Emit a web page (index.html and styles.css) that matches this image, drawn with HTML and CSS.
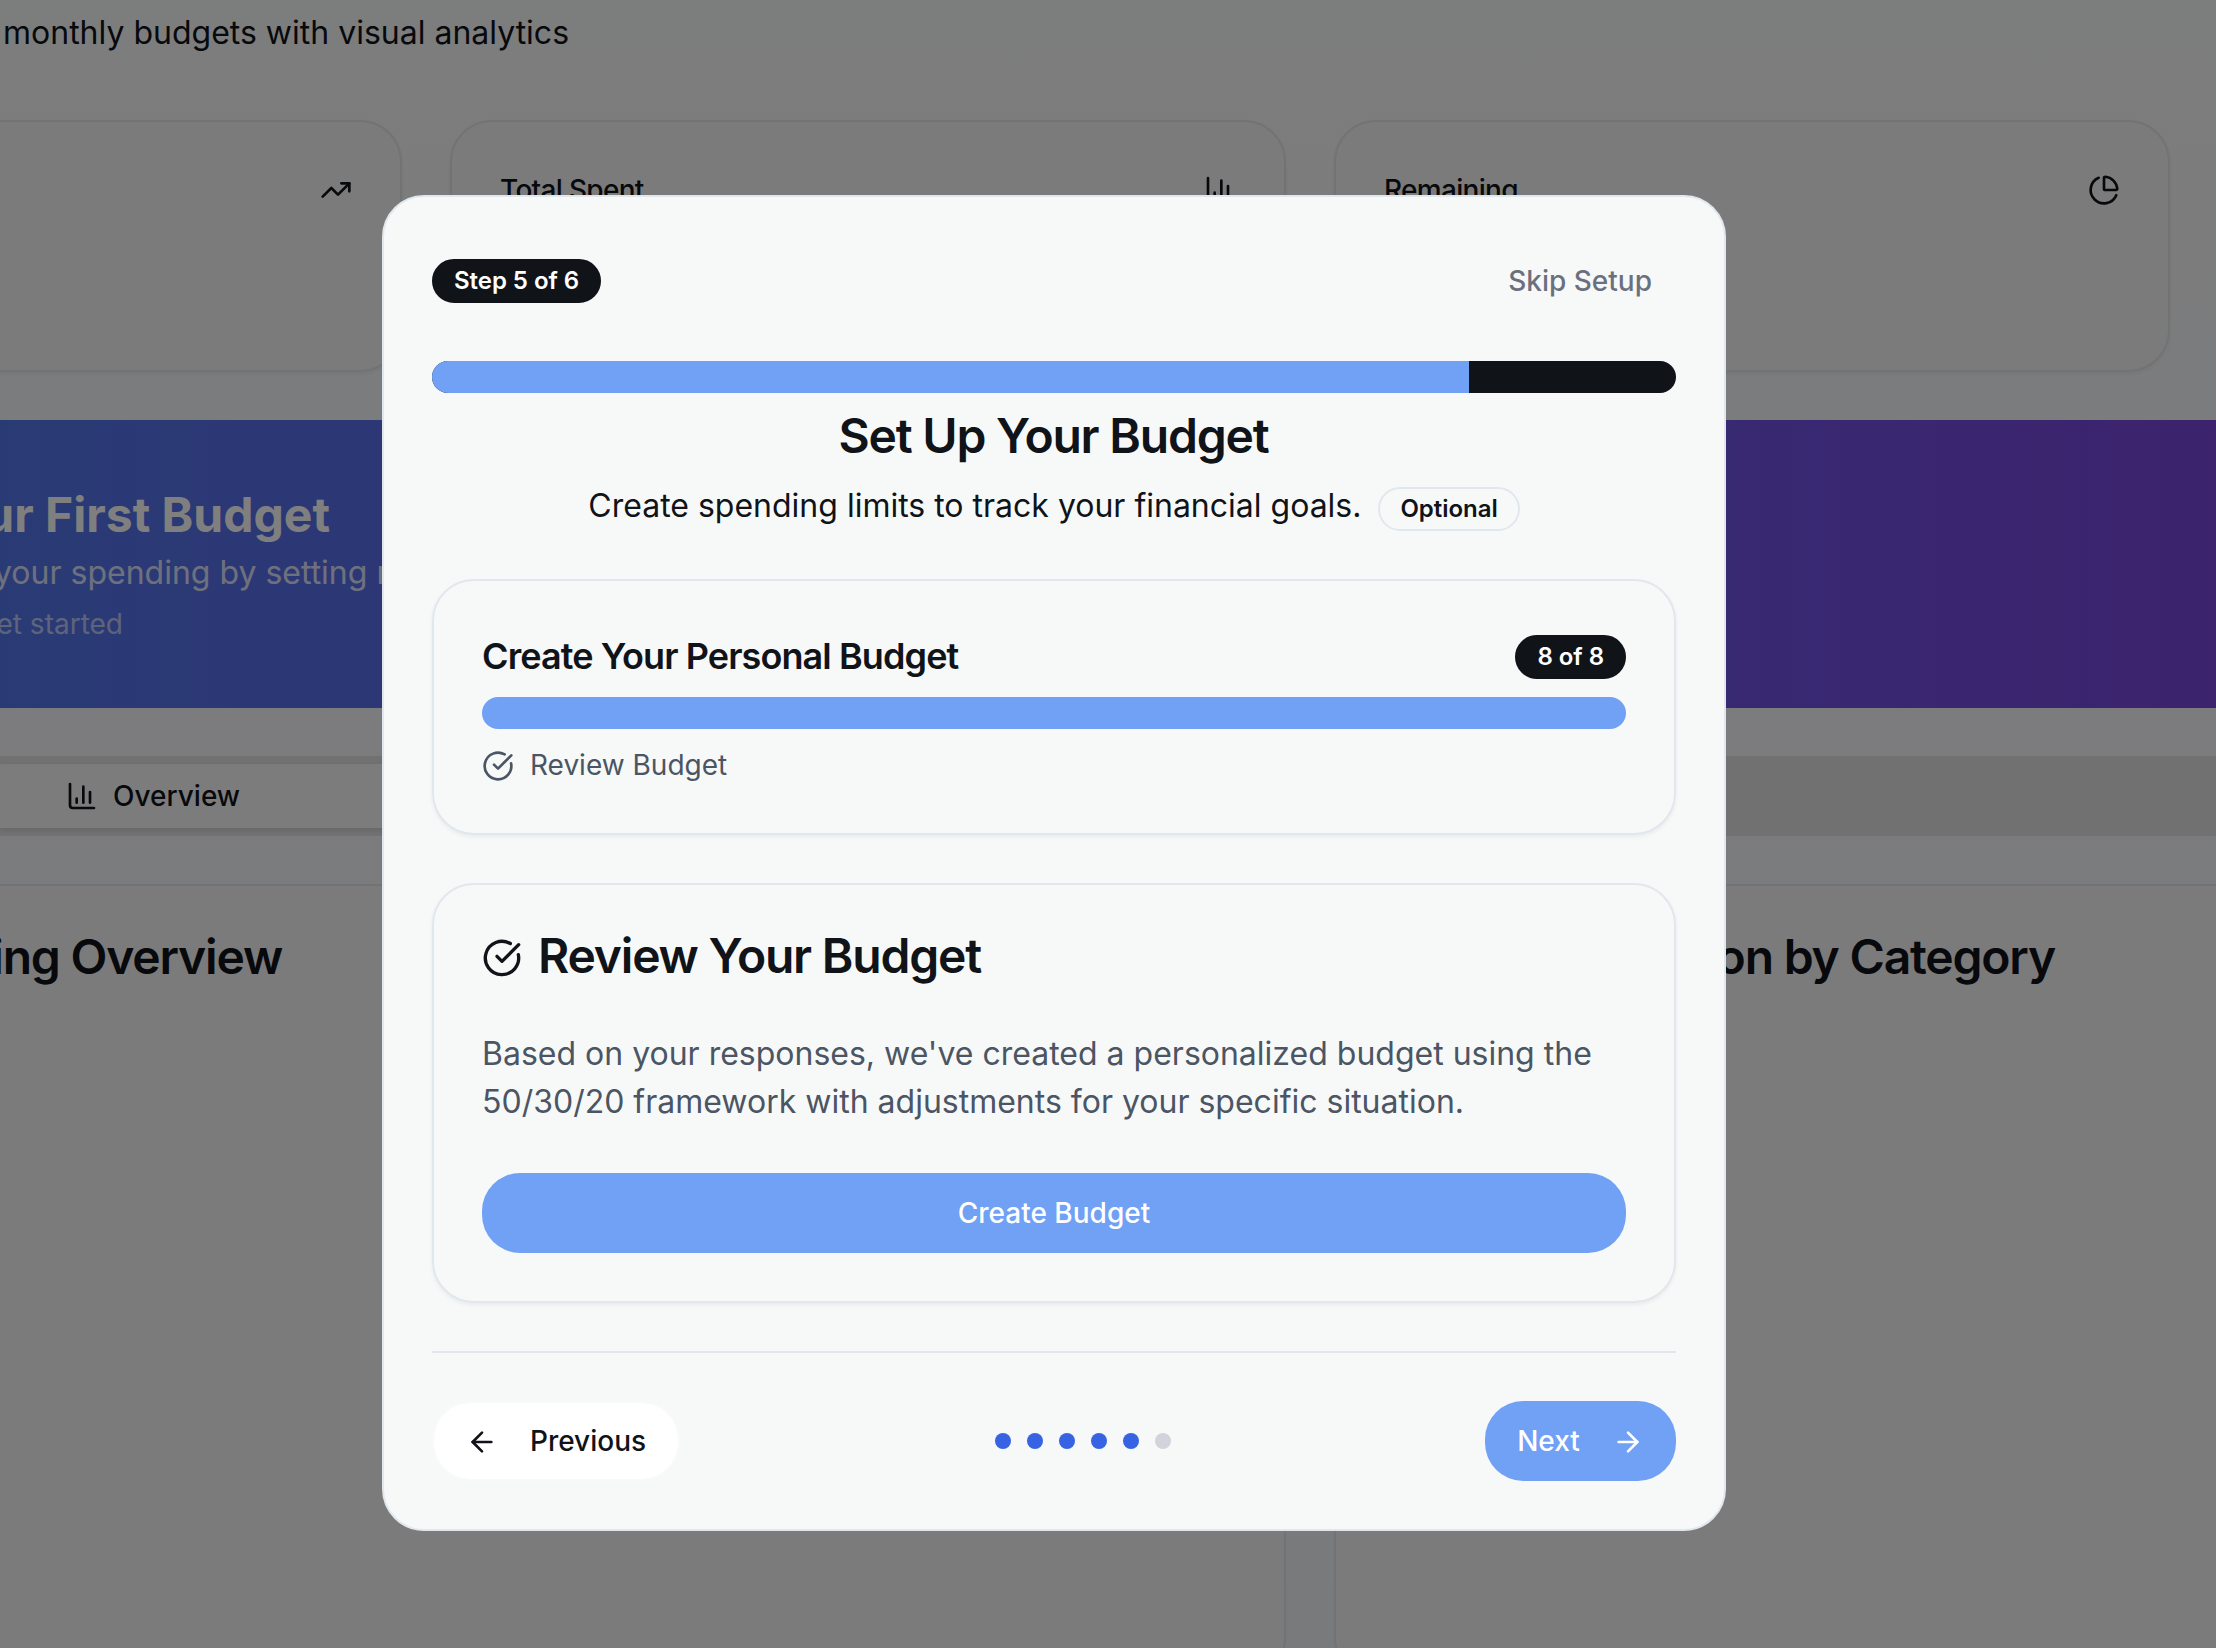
FILE: index.html
```html
<!DOCTYPE html>
<html lang="en">
<head>
<meta charset="utf-8">
<title>Budget Setup</title>
<link rel="stylesheet" href="styles.css">
</head>
<body>
<div class="page">
  <main class="dashboard">
    <p class="lead">monthly budgets with visual analytics</p>
    <section class="stats">
      <article class="stat">
        <h3></h3>
        <svg class="icon" viewBox="0 0 24 24"><path d="M16 7h6v6"/><path d="m22 7-8.5 8.5-5-5L2 17"/></svg>
      </article>
      <article class="stat">
        <h3>Total Spent</h3>
        <svg class="icon" viewBox="0 0 24 24"><path d="M3 3v16a2 2 0 0 0 2 2h16"/><path d="M18 17V9"/><path d="M13 17V5"/><path d="M8 17v-3"/></svg>
      </article>
      <article class="stat">
        <h3>Remaining</h3>
        <svg class="icon" viewBox="0 0 24 24"><path d="M21 12c.552 0 1.005-.449.95-.998a10 10 0 0 0-8.953-8.951c-.55-.055-.998.398-.998.95v8a1 1 0 0 0 1 1z"/><path d="M21.21 15.89A10 10 0 1 1 8 2.83"/></svg>
      </article>
    </section>
    <section class="banner">
      <h2 class="banner-title">ur First Budget</h2>
      <p class="banner-text">your spending by setting monthly</p>
      <p class="banner-note">et started</p>
    </section>
    <nav class="tabs">
      <button class="tab">
        <svg class="icon" viewBox="0 0 24 24"><path d="M3 3v16a2 2 0 0 0 2 2h16"/><path d="M18 17V9"/><path d="M13 17V5"/><path d="M8 17v-3"/></svg>
        Overview
      </button>
    </nav>
    <section class="panels">
      <article class="panel"><h2 class="panel-title spending">ing Overview</h2></article>
      <article class="panel"><h2 class="panel-title category">Distribution by Category</h2></article>
    </section>
  </main>

  <div class="overlay">
    <div class="modal" role="dialog">
      <header class="modal-head">
        <span class="badge">Step 5 of 6</span>
        <button class="skip">Skip Setup</button>
      </header>
      <div class="progress"><div class="bar" style="width:83.3333%"></div></div>
      <h1 class="modal-title">Set Up Your Budget</h1>
      <p class="modal-sub"><span>Create spending limits to track your financial goals.</span><span class="badge outline">Optional</span></p>

      <section class="card status">
        <div class="status-head">
          <h2>Create Your Personal Budget</h2>
          <span class="badge">8 of 8</span>
        </div>
        <div class="progress"><div class="bar" style="width:100%"></div></div>
        <div class="status-step">
          <svg class="icon" viewBox="0 0 24 24"><path d="M21.801 10A10 10 0 1 1 17 3.335"/><path d="m9 11 3 3L22 4"/></svg>
          <span>Review Budget</span>
        </div>
      </section>

      <section class="card review">
        <h2 class="review-title">
          <svg class="icon large" viewBox="0 0 24 24"><path d="M21.801 10A10 10 0 1 1 17 3.335"/><path d="m9 11 3 3L22 4"/></svg>
          <span>Review Your Budget</span>
        </h2>
        <p class="review-text">Based on your responses, we've created a personalized budget using the<br>50/30/20 framework with adjustments for your specific situation.</p>
        <button class="btn primary">Create Budget</button>
      </section>

      <footer class="modal-foot">
        <button class="btn previous">
          <svg class="icon" viewBox="0 0 24 24"><path d="m12 19-7-7 7-7"/><path d="M19 12H5"/></svg>
          <span>Previous</span>
        </button>
        <div class="dots"><i class="dot"></i><i class="dot"></i><i class="dot"></i><i class="dot"></i><i class="dot"></i><i class="dot off"></i></div>
        <button class="btn primary next">
          <span>Next</span>
          <svg class="icon" viewBox="0 0 24 24"><path d="M5 12h14"/><path d="m12 5 7 7-7 7"/></svg>
        </button>
      </footer>
    </div>
  </div>
</div>
</body>
</html>
```
FILE: styles.css
```css
* { box-sizing: border-box; }
body, h1, h2, h3, p { margin: 0; }
body {
  font-family: Inter, "Liberation Sans", sans-serif;
  font-size: 32px;
  line-height: 48px;
  color: #101318;
}
button { border: 0; background: none; font: inherit; color: inherit; padding: 0; letter-spacing: inherit; }
.icon {
  width: 32px;
  height: 32px;
  flex: none;
  fill: none;
  stroke: currentColor;
  stroke-width: 2;
  stroke-linecap: round;
  stroke-linejoin: round;
}
.icon.large { width: 40px; height: 40px; margin-top: 4px; }

.page { position: relative; width: 2216px; height: 1648px; overflow: hidden; background: linear-gradient(#f9fafb, #f3f5f9); }

/* Dashboard behind the dialog */
.dashboard { display: flex; flex-direction: column; height: 100%; overflow: hidden; white-space: nowrap; }
.lead { flex: none; padding: 9px 0 0 3px; height: 120px; }
.stats { display: grid; flex: none; grid-template-columns: repeat(3, 836px); gap: 48px; margin-left: -434px; margin-bottom: 48px; }
.stat {
  display: flex;
  justify-content: space-between;
  align-items: flex-start;
  height: 252px;
  padding: 52px 48px;
  border: 2px solid #e2e6ea;
  border-radius: 42px;
  background: #f7f7f7;
  box-shadow: 0 2px 4px rgba(0, 0, 0, .06);
}
.stat h3 { font-size: 28px; line-height: 32px; font-weight: 500; letter-spacing: -.025em; }
.banner {
  height: 288px;
  flex: none;
  padding-top: 67px;
  color: #fff;
  background: linear-gradient(to right, #5376ea, #5a6eec 17%, #7052e6 78%, #7a46dc);
}
.banner-title, .banner-note, .spending { display: flex; justify-content: flex-end; }
.banner-title { width: 330px; font-size: 48px; line-height: 56px; font-weight: 700; }
.banner-text { padding-top: 6px; margin-left: -6px; opacity: .8; }
.banner-note { width: 123px; margin-top: 3px; font-size: 28px; opacity: .6; }
.tabs { height: 80px; flex: none; margin: 48px 0; padding: 8px 0; background: #e3e3e3; }
.tab {
  display: flex;
  align-items: center;
  gap: 15px;
  width: 700px;
  height: 64px;
  padding-left: 66px;
  background: #f9f9f9;
  font-size: 28px;
  font-weight: 500;
  box-shadow: 0 2px 6px rgba(0, 0, 0, .1);
}
.panels { display: grid; flex: none; grid-template-columns: 1686px 1686px; gap: 48px; margin-left: -400px; }
.panel { height: 796px; padding-top: 39px; border: 2px solid #e2e6ea; border-radius: 42px; background: #f7f7f7; }
.panel-title { font-size: 48px; line-height: 64px; font-weight: 600; letter-spacing: -.025em; }
.spending { width: 680px; }
.category { width: 719px; text-align: right; }

/* Setup dialog */
.overlay { position: absolute; inset: 0; padding: 195px 0 0 382px; background: rgba(0, 0, 0, .5); }
.modal {
  display: flex;
  flex-direction: column;
  width: 1344px;
  height: 1336px;
  padding: 48px;
  border: 2px solid #e1e8ed;
  border-radius: 42px;
  background: #f7f9f9;
}
.modal-head { display: flex; justify-content: space-between; align-items: center; height: 72px; margin-bottom: 44px; }
.badge {
  display: inline-flex;
  align-items: center;
  height: 44px;
  padding: 0 20px;
  border: 2px solid #101318;
  border-radius: 22px;
  background: #101318;
  color: #fff;
  font-size: 24px;
  line-height: 32px;
  font-weight: 600;
  letter-spacing: -.04px;
}
.badge.outline { background: none; border-color: #e1e8ed; color: #101318; }
.skip { padding: 0 24px; font-size: 28px; font-weight: 500; color: #6b7080; }
.progress { height: 32px; flex: none; overflow: hidden; border-radius: 16px; background: #101318; }
.bar { height: 100%; background: #70a1f4; }
.modal-title { margin: 11px 1px 0 0; text-align: center; font-size: 48px; line-height: 64px; font-weight: 600; letter-spacing: -.025em; }
.modal-sub { display: flex; justify-content: center; gap: 17px; height: 48px; margin: 14px 0 49px; }
.modal-sub .badge { margin-top: 5px; }
.card {
  padding: 48px;
  border: 2px solid #e1e8ed;
  border-radius: 42px;
  background: #f7f9f9;
  box-shadow: 0 2px 4px rgba(0, 0, 0, .06);
}
.status { height: 256px; }
.status-head { display: flex; justify-content: space-between; align-items: center; height: 56px; margin-bottom: 12px; }
.status-head h2 { font-size: 36px; line-height: 54px; padding-bottom: 2px; font-weight: 600; letter-spacing: -.025em; }
.status-step { display: flex; align-items: center; gap: 16px; margin-top: 16px; height: 40px; font-size: 28px; color: #4b5563; }
.status-step .icon, .modal-foot .icon { margin-top: 2px; }
.review { height: 420px; margin: 48px 0; }
.review-title { display: flex; align-items: center; gap: 16px; height: 46px; font-size: 48px; line-height: 46px; font-weight: 600; letter-spacing: -.025em; }
.review-text { margin: 51px 0 47px; color: #4b5563; white-space: nowrap; }
.btn { display: flex; align-items: center; justify-content: center; height: 80px; border-radius: 38px; font-size: 28px; font-weight: 500; }
.primary { width: 100%; background: #70a1f4; color: #fff; }
.modal-foot { display: flex; justify-content: space-between; align-items: center; padding-top: 48px; border-top: 2px solid #e1e8ed; }
.previous { width: 248px; gap: 32px; border: 2px solid #f8f9fa; background: #fff; background-clip: padding-box; }
.next { width: 191px; gap: 32px; }
.dots { display: flex; gap: 16px; }
.dot { width: 16px; height: 16px; border-radius: 50%; background: #3662e3; }
.dot.off { background: #d1d5db; }
```
